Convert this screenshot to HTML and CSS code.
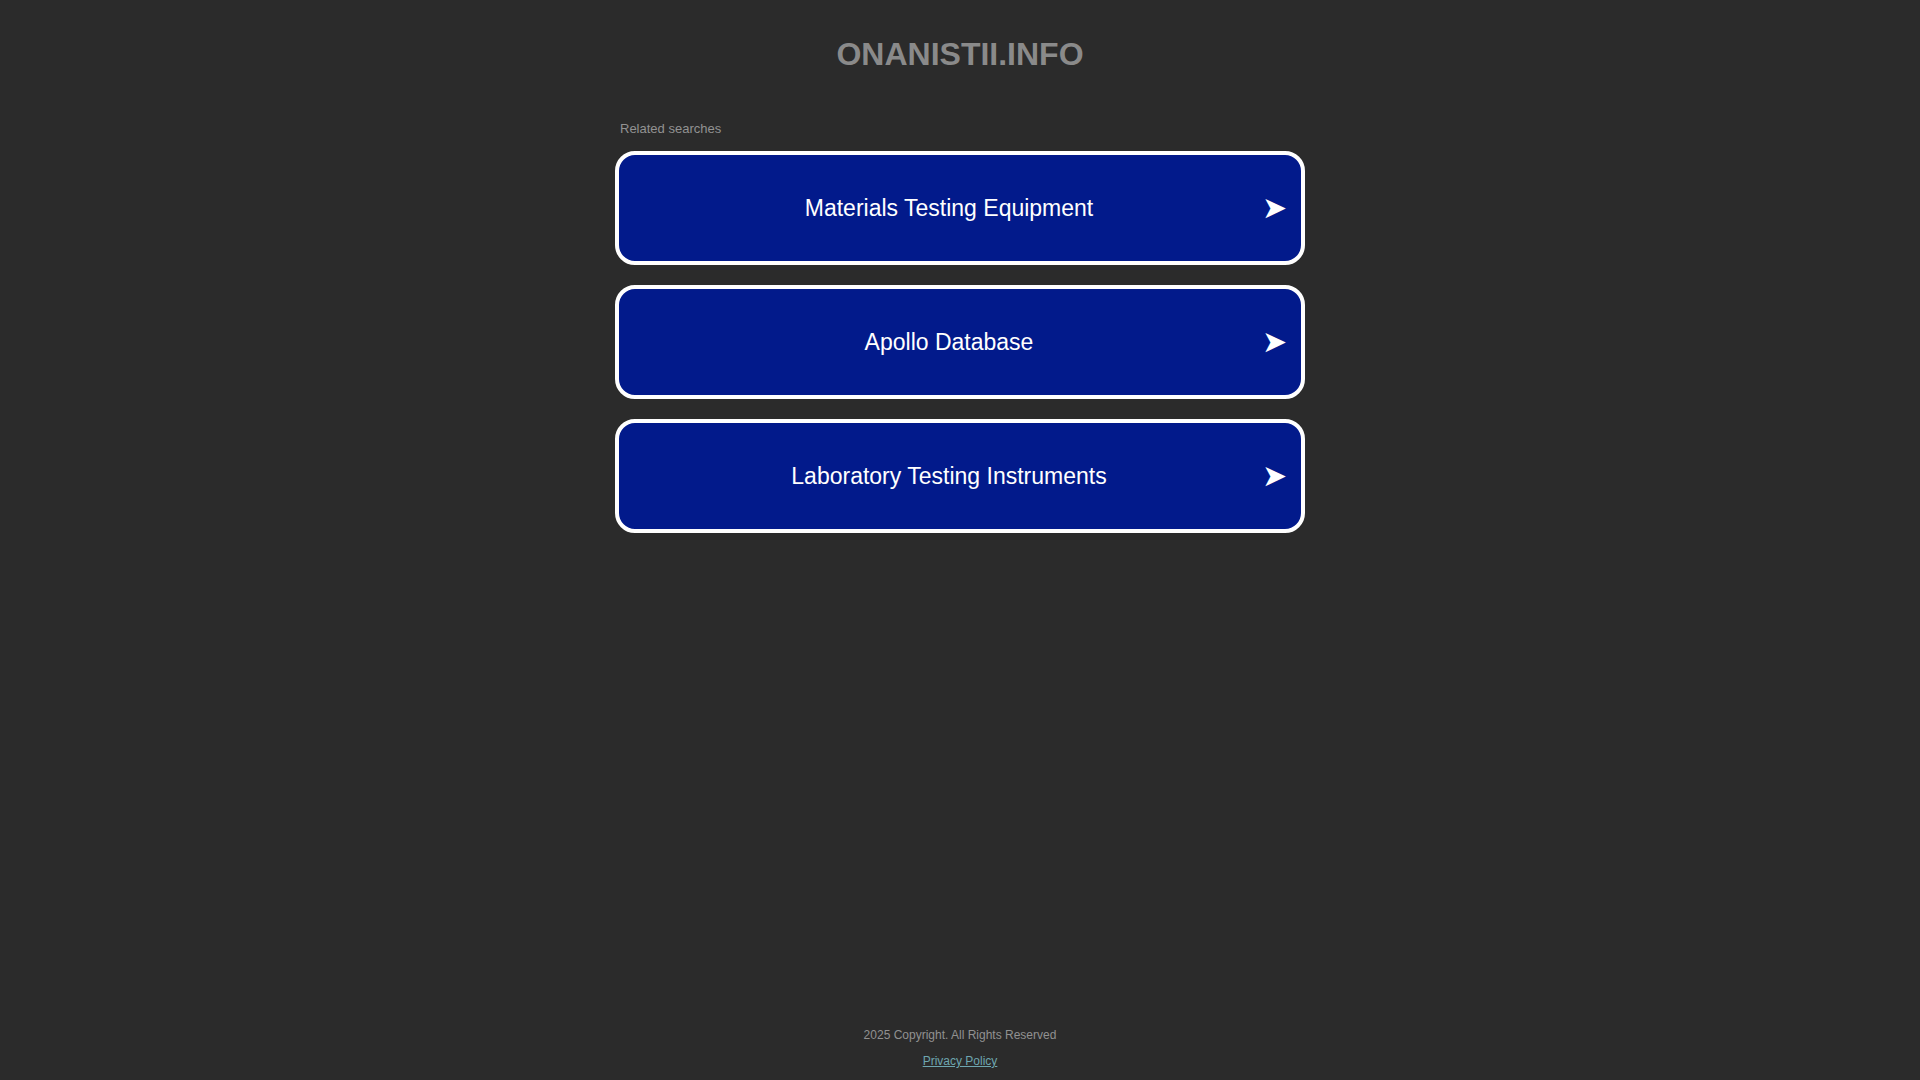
FILE: index.html
```html
<!DOCTYPE html>
<html lang="en">
<head>
<meta charset="utf-8">
<title>onanistii.info</title>
<link rel="stylesheet" href="styles.css">
</head>
<body>
<div class="page">
  <header class="header">
    <h1 class="domain">ONANISTII.INFO</h1>
  </header>
  <main class="content">
    <div class="related-label">Related searches</div>
    <ul class="links">
      <li><a class="link" href="#"><span class="link-text">Materials Testing Equipment</span><span class="arrow">&#10148;</span></a></li>
      <li><a class="link" href="#"><span class="link-text">Apollo Database</span><span class="arrow">&#10148;</span></a></li>
      <li><a class="link" href="#"><span class="link-text">Laboratory Testing Instruments</span><span class="arrow">&#10148;</span></a></li>
    </ul>
  </main>
  <footer class="footer">
    <div class="copyright">2025 Copyright. All Rights Reserved</div>
    <a class="privacy" href="#">Privacy Policy</a>
  </footer>
</div>
</body>
</html>
```

FILE: styles.css
```css
html, body {
  margin: 0;
  padding: 0;
}
body {
  background: #2b2b2b;
  font-family: "Liberation Sans", Arial, Helvetica, sans-serif;
}
.page {
  min-height: 100vh;
  display: flex;
  flex-direction: column;
  align-items: center;
}
.header {
  padding-top: 36px;
}
.domain {
  margin: 0;
  font-size: 32px;
  line-height: 36px;
  font-weight: bold;
  color: #8a8a8a;
  text-align: center;
}
.content {
  width: 690px;
  padding-top: 49px;
  flex: 1;
}
.related-label {
  font-size: 13px;
  line-height: 16px;
  color: #929292;
  padding-left: 5px;
  margin-bottom: 14px;
}
.links {
  list-style: none;
  margin: 0;
  padding: 0;
  display: flex;
  flex-direction: column;
  gap: 20px;
}
.link {
  box-sizing: border-box;
  height: 114px;
  display: flex;
  align-items: center;
  padding: 0 15px 0 17px;
  background: #021a8b;
  border: 4px solid #ffffff;
  border-radius: 20px;
  color: #ffffff;
  text-decoration: none;
}
.link-text {
  flex: 1;
  text-align: center;
  font-size: 23px;
  line-height: 28px;
}
.arrow {
  width: 24px;
  text-align: right;
  font-family: "DejaVu Sans", sans-serif;
  font-size: 30px;
  line-height: 28px;
}
.footer {
  display: flex;
  flex-direction: column;
  align-items: center;
  gap: 10px;
  padding-bottom: 11px;
}
.copyright {
  font-size: 12px;
  line-height: 16px;
  color: #919191;
}
.privacy {
  font-size: 12px;
  line-height: 16px;
  color: #6ea6b0;
  text-decoration: underline;
}
```
